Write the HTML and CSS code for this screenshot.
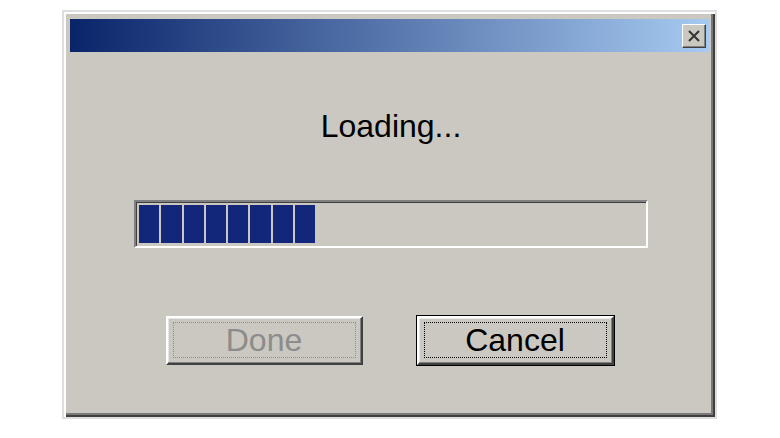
FILE: index.html
```html
<!DOCTYPE html>
<html lang="en">
<head>
<meta charset="utf-8">
<title>Loading</title>
<link rel="stylesheet" href="styles.css">
</head>
<body>
<div class="window">
  <div class="titlebar">
    <button class="close" aria-label="Close">
      <svg width="14" height="14" viewBox="0 0 14 14"><path d="M2 2 L12 12 M12 2 L2 12" stroke="#333" stroke-width="2" fill="none"/></svg>
    </button>
  </div>
  <div class="content">
    <div class="message">Loading...</div>
    <div class="progress">
      <div class="block"></div>
      <div class="block"></div>
      <div class="block"></div>
      <div class="block"></div>
      <div class="block"></div>
      <div class="block"></div>
      <div class="block"></div>
      <div class="block"></div>
    </div>
    <div class="actions">
      <button class="btn btn-disabled"><span class="focus">Done</span></button>
      <button class="btn btn-default"><span class="focus">Cancel</span></button>
    </div>
  </div>
</div>
</body>
</html>
```

FILE: styles.css
```css
html, body {
  margin: 0;
  background: #ffffff;
}

body {
  padding: 10px 0 0 62px;
  font-family: "Liberation Sans", Arial, sans-serif;
}

.window {
  box-sizing: border-box;
  width: 655px;
  height: 409px;
  background: #cac8c0;
  border: 2px solid #dedede;
  box-shadow: inset 2px 2px #ffffff, inset -2px -2px #3f3f3f, inset -4px -4px #7a7a7a;
  padding: 7px 6px 0 6px;
  display: flex;
  flex-direction: column;
}

.titlebar {
  height: 33px;
  background: linear-gradient(to right, #0a246a, #a6caf0);
  display: flex;
  justify-content: flex-end;
  align-items: center;
  padding-right: 3px;
}

.close {
  box-sizing: border-box;
  width: 24px;
  height: 24px;
  padding: 0;
  background: #cac8c0;
  border: 1px solid;
  border-color: #ffffff #404040 #404040 #ffffff;
  box-shadow: inset -1px -1px #808080;
  display: flex;
  align-items: center;
  justify-content: center;
}

.content {
  display: flex;
  flex-direction: column;
  align-items: center;
}

.message {
  margin-top: 58px;
  font-size: 32px;
  line-height: 32px;
  color: #000;
  margin-left: 3px;
}

.progress {
  box-sizing: border-box;
  margin-top: 58px;
  margin-left: 3px;
  width: 514px;
  height: 48px;
  border: 2px solid;
  border-color: #808080 #ffffff #ffffff #808080;
  box-shadow: inset 1px 1px #404040;
  padding: 3px;
  display: flex;
  gap: 2px;
}

.block {
  width: 20.3px;
  background: #12277a;
}

.actions {
  margin-top: 68px;
  display: flex;
  gap: 54px;
}

.btn {
  box-sizing: border-box;
  width: 197px;
  height: 49px;
  background: #cac8c0;
  border: 2px solid;
  border-color: #ffffff #404040 #404040 #ffffff;
  box-shadow: inset -1px -1px #808080, inset 1px 1px #e6e6e6;
  padding: 4px 5px 5px 5px;
  font-family: "Liberation Sans", Arial, sans-serif;
  font-size: 32px;
  line-height: 32px;
  display: flex;
  margin: 0;
}

.focus {
  flex: 1;
  display: flex;
  align-items: center;
  justify-content: center;
  border: 1px dotted;
}

.btn-disabled {
  color: #8c8c8c;
}

.btn-disabled .focus {
  border-color: #8f8f8f;
}

.btn-default {
  color: #000;
  box-shadow: 0 0 0 1px #000000, inset -1px -1px #808080, inset 1px 1px #e6e6e6;
}

.btn-default .focus {
  border-color: #000;
}
```
